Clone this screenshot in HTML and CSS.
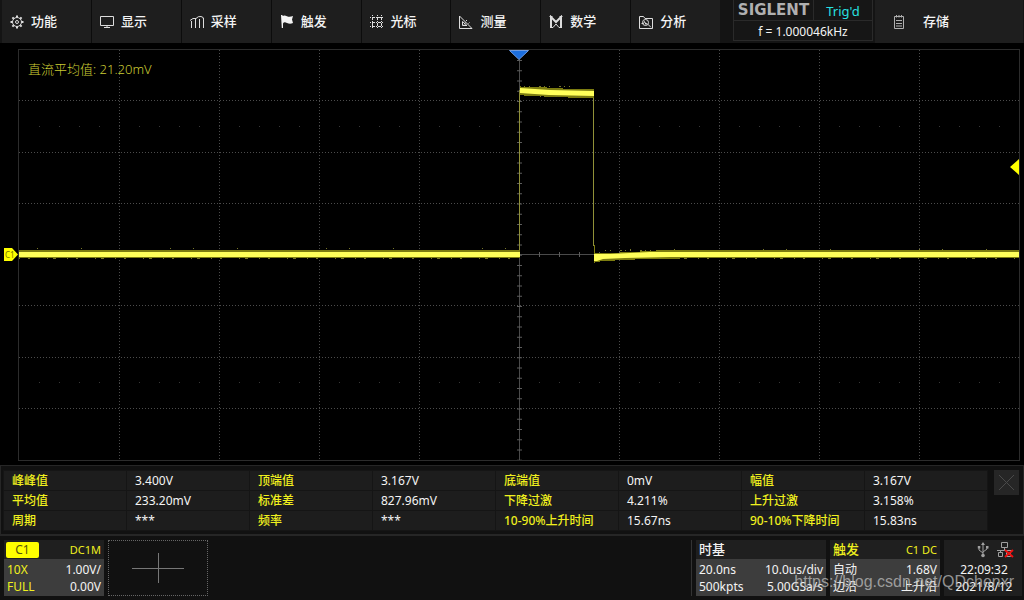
FILE: index.html
```html
<!DOCTYPE html>
<html lang="zh-CN">
<head>
<meta charset="utf-8">
<title>SIGLENT</title>
<link rel="stylesheet" href="styles.css">
</head>
<body>
<header class="topbar">
  <nav class="menu">
    <button class="menu-item" type="button"><svg class="icon" viewBox="0 0 14 14"><circle cx="7" cy="7" r="4.500"/><circle cx="7" cy="7" r="1.500"/><path class="teeth" d="M7 .5v2M7 11.500v2M.5 7h2M11.500 7h2M2.400 2.400l1.400 1.400M10.200 10.200l1.400 1.400M11.600 2.400l-1.400 1.400M3.800 10.200l-1.400 1.400"/></svg>功能</button>
    <button class="menu-item" type="button"><svg class="icon" viewBox="0 0 14 14"><path d="M.5 1.500h13v9H.5zM7 10.500v2M4 12.500h6"/></svg>显示</button>
    <button class="menu-item" type="button"><svg class="icon" viewBox="0 0 14 14"><path d="M1.500 13V6M5.500 13V4M9.500 13V4M13.500 13V3M0 5.500 3 3.500h3Q8 1 11 1.500t2.500 3"/></svg>采样</button>
    <button class="menu-item" type="button"><svg class="icon solid" viewBox="0 0 14 14"><path d="M1 0h1.500v1Q4.500 0 7 1.200T13 1l-1 3.500 1 3.500Q10 9.500 7 8T3 8.500V13H1.800z"/></svg>触发</button>
    <button class="menu-item" type="button"><svg class="icon" viewBox="0 0 14 14"><path d="M2.500 0v14M7.500 0v14M11.500 0v14M0 2.500h14M0 7.500h14M0 11.500h14" stroke-dasharray="1 1 3 1"/></svg>光标</button>
    <button class="menu-item" type="button"><svg class="icon" viewBox="0 0 14 14"><path d="M.5 1v12.500H13zM3.500 6.500v4H8zM5 9.500l1.500-2M7 6l1-1M9.500 8.500l1-1"/></svg>测量</button>
    <button class="menu-item" type="button"><svg class="icon" viewBox="0 0 14 14"><path class="thick" d="M2 12V2l5 5 5-5v10"/><path d="M.5 1.500h3M10.500 1.500h3M1 12.500h3L7 9l3 3.500h3"/></svg>数学</button>
    <button class="menu-item" type="button"><svg class="icon" viewBox="0 0 14 14"><path d="M.5 13.500v-12h4l1.500 2h7.500v10zM8.800 9.200l3 3M2.500 8.500h2l1-2 1.500 3 1-1.500"/><circle cx="6.500" cy="7.500" r="3"/></svg>分析</button>
  </nav>
  <section class="status">
    <span class="brand">SIGLENT</span>
    <span class="trig">Trig'd</span>
    <span class="freq">f = 1.000046kHz</span>
  </section>
  <button class="menu-item save" type="button"><svg class="icon dim" viewBox="0 0 14 14"><path d="M2.500 1.500h9v12h-9zM4.500 0v2.500M7 0v2.500M9.500 0v2.500M4 5.500h6M4 8.500h6M4 11h6"/></svg>存储</button>
</header>

<main class="plot">
  <svg class="scope" viewBox="0 43 1024 422" preserveAspectRatio="none" role="img" aria-label="C1">
    <g class="grid">
      <path d="M119.500 50v411M219.500 50v411M319.500 50v411M419.500 50v411M619.500 50v411M719.500 50v411M819.500 50v411M919.500 50v411"/>
      <path d="M19 100.500h1000M19 152.500h1000M19 203.500h1000M19 305.500h1000M19 357.500h1000M19 408.500h1000"/>
    </g>
    <path class="minor" d="M39 126.500h980M39 382.500h980"/>
    <path class="axis" d="M519.500 50v411M19 254.500h1000"/>
    <path class="ticks-v" d="M519.500 60v401"/>
    <path class="ticks-h" d="M539 254.500h480"/>
    <rect class="frame" x="18.500" y="49.500" width="1001" height="411"/>
    <path class="edge" d="M519.500 90v162M593.500 94v152"/>
    <g class="halo">
      <path d="M19 250h501v8H19zM520 86h1v1h26v1h16v1h31v9h-26v-1h-24v-1h-20v-1h-4zM594 245h1v8h25v-1h20v-1h16v-1h363v8H680v1h-45v1h-20v1h-15v1h-5v1h-1z"/>
    </g>
    <path class="noise" stroke-dasharray="1 8 2 17 1 5 3 11" d="M19 258.500h501M650 258.500h369"/>
    <path class="noise" stroke-dasharray="1 43 1 88 1 22" d="M37 248.500h483M630 249.500h389"/>
    <path class="noise" stroke-dasharray="1 4 1 9 2 3" d="M524 86.500h46M540 96.500h54M605 250.500h55"/>
    <path class="trace" d="M19 252h501v5H19zM520 88l30 2 44 1v5l-45-1-29-2zM594 254h16l40-2h369v5H670l-45 1-22 1-6 2h-3z"/>
    <path class="trigger-pos" d="M509.500 50.500h19l-9.500 9z"/>
    <path class="marker" d="M4 248h8l6 6.500-6 6.500H4zM1019 159v16l-9-8z"/>
    <text class="marker-text" x="5" y="258">C1</text>
  </svg>
  <p class="average">直流平均值: 21.20mV</p>
</main>

<section class="measure">
  <table class="measure-table">
    <tr><th>峰峰值</th><td>3.400V</td><th>顶端值</th><td>3.167V</td><th>底端值</th><td>0mV</td><th>幅值</th><td>3.167V</td></tr>
    <tr><th>平均值</th><td>233.20mV</td><th>标准差</th><td>827.96mV</td><th>下降过激</th><td>4.211%</td><th>上升过激</th><td>3.158%</td></tr>
    <tr><th>周期</th><td>***</td><th>频率</th><td>***</td><th>10-90%上升时间</th><td>15.67ns</td><th>90-10%下降时间</th><td>15.83ns</td></tr>
  </table>
  <button class="close" type="button" aria-label="关闭"><svg viewBox="0 0 25 25"><path d="M5 5l15 15M20 5 5 20"/></svg></button>
</section>

<footer class="bottombar">
  <section class="card channel">
    <div class="card-head"><span class="badge">C1</span><span class="coupling">DC1M</span></div>
    <div class="card-row"><span class="yellow">10X</span><span>1.00V/</span></div>
    <div class="card-row"><span class="yellow">FULL</span><span>0.00V</span></div>
  </section>
  <button class="add" type="button" aria-label="添加"><svg viewBox="0 0 52 30"><path d="M0 15.500h52M26.500 0v30"/></svg></button>
  <div class="right">
    <section class="card timebase">
      <div class="card-head"><strong>时基</strong></div>
      <div class="card-row"><span>20.0ns</span><span>10.0us/div</span></div>
      <div class="card-row"><span>500kpts</span><span>5.00GSa/s</span></div>
    </section>
    <section class="card trigger">
      <div class="card-head"><strong class="yellow">触发</strong><span class="coupling">C1 DC</span></div>
      <div class="card-row"><span>自动</span><span>1.68V</span></div>
      <div class="card-row"><span>边沿</span><span>上升沿</span></div>
    </section>
    <section class="clock">
      <div class="clock-icons">
        <svg class="usb" viewBox="0 0 12 16"><path d="M6 1v12M2 5v3l4 3M10 5v2L6 10"/><path class="fill" d="M6 0l2 3H4zM.8 4h2.500v2.500H.8zM9 4h2.500v2.500H9z"/><circle class="fill" cx="6" cy="13.500" r="1.800"/></svg>
        <svg class="lan" viewBox="0 0 17 16"><path d="M4.500.5h6v5h-6zM7.500 6v2.500M0 8.500h15M3.500 9v2M1.500 10.500h4v4h-4zM9.500 10.500h4v4h-4z"/><path class="cross" d="M8 8l8 7M16 8l-8 7"/></svg>
      </div>
      <time>22:09:32</time>
      <time>2021/8/12</time>
    </section>
  </div>
  <span class="watermark">https://blog.csdn.net/QDchenxr</span>
</footer>
</body>
</html>
```
FILE: styles.css
```css
* { box-sizing: border-box; }

body {
  margin: 0;
  min-height: 100vh;
  display: flex;
  flex-direction: column;
  background: #000;
  color: #f4f4f4;
  font: 12px/17px "Noto Sans", "Noto Sans CJK SC", sans-serif;
}

button {
  border: 0;
  padding: 0;
  color: inherit;
  font: inherit;
}

svg { display: block; fill: none; }

.yellow, .coupling { color: #f0f01e; }

/* Top bar */
.topbar {
  display: grid;
  grid-template-columns: 729fr 140px 148fr;
  column-gap: 2px;
  height: 43px;
  padding-left: 2px;
  padding-right: 1px;
  background: #141414;
}

.menu {
  display: grid;
  grid-template-columns: repeat(8, 1fr);
  column-gap: 1px;
  margin-right: 11px;
  background: #0c0c0c;
}

.menu-item {
  display: flex;
  align-items: center;
  gap: 7px;
  padding-left: 8px;
  background: #1e1e1e;
  font-size: 13px;
  font-weight: 500;
}

.icon {
  width: 14px;
  height: 14px;
  stroke: #ddd;
  stroke-width: 1;
}

.icon.solid { fill: #f4f4f4; stroke: none; }
.icon.dim { stroke: #b0b0b0; }
.icon .teeth, .icon .thick { stroke-width: 2; }

.save { padding-left: 17px; gap: 17px; }

.status {
  display: grid;
  grid-template: 20px 20px / 80px 1fr;
  align-self: start;
  border: 1px solid #2a2a2a;
  border-top: 0;
  background: #161616;
  text-align: center;
}

.brand {
  border-right: 1px solid #2a2a2a;
  color: #b0b0b0;
  font: bold 15px/20px "DejaVu Sans", sans-serif;
}

.trig { color: #27e0e0; font-size: 13px; line-height: 22px; }

.freq {
  grid-column: 1 / -1;
  border-top: 1px solid #2a2a2a;
  line-height: 21px;
}

/* Waveform */
.plot { position: relative; flex: 1; min-height: 300px; }
.scope { width: 100%; height: 100%; position: absolute; }

.average {
  position: absolute;
  left: 28px;
  top: 18px;
  margin: 0;
  color: #cccc33;
  font-size: 13px;
  font-weight: 300;
}

.grid { stroke: #4c4c4c; stroke-dasharray: 1 2; }
.minor { stroke: #383838; stroke-dasharray: 1 19; }
.axis { stroke: #4a4a4a; }
.ticks-v { stroke: #5c5c5c; stroke-width: 5; stroke-dasharray: 1 9.25; }
.ticks-h { stroke: #5c5c5c; stroke-width: 5; stroke-dasharray: 1 19; }
.frame { stroke: #2c2c2c; }
.edge { stroke: #909038; }
.halo { fill: #7c7c10; }
.noise { stroke: #77772a; }
.trace { fill: #ffff5a; }
.trigger-pos { fill: #1c6fe0; stroke: #6f9be0; }
.marker { fill: #ffff00; }
.marker-text { fill: #777700; font-size: 8px; }

/* Measurements */
.measure {
  display: flex;
  gap: 6px;
  padding: 4px 4px 3px 2px;
  border: 1px solid #262626;
  background: #111;
}

.measure-table {
  flex: 1;
  table-layout: fixed;
  border-collapse: collapse;
}

.measure-table th,
.measure-table td {
  width: 123px;
  height: 20px;
  padding: 0 8px;
  border: 1px solid #151515;
  background: #1d1d1d;
  line-height: 17px;
  text-align: left;
  white-space: nowrap;
}

.measure-table th { color: #f0f01e; font-weight: 500; }

.close { width: 25px; height: 25px; background: #262626; }
.close svg { stroke: #4a4a4a; stroke-width: 1; }

/* Bottom bar */
.bottombar {
  position: relative;
  display: flex;
  gap: 4px;
  padding: 4px 2px 4px 4px;
  border-top: 1px solid #262626;
  background: #111;
}

.card { background: #3d3d3d; }

.card-head {
  display: flex;
  justify-content: space-between;
  align-items: center;
  height: 19px;
  margin-bottom: 2px;
  padding: 0 3px;
  background: #1f1f1f;
}

.card-head strong { font-size: 13px; font-weight: 500; }
.coupling { font-size: 11px; }

.card-row {
  display: flex;
  justify-content: space-between;
  padding: 0 3px;
}

.card-row:last-child { padding-bottom: 1px; }

.channel { width: 100px; }
.channel .card-head { padding-left: 2px; }

.badge {
  width: 33px;
  border-radius: 2px;
  background: #ffff00;
  color: #55550a;
  line-height: 16px;
  text-align: center;
}

.add {
  display: grid;
  place-items: center;
  width: 100px;
  border: 1px dotted #666;
  background: #111;
}

.add svg { width: 52px; height: 30px; stroke: #777; }

.right {
  display: flex;
  gap: 4px;
  margin-left: auto;
  padding-left: 4px;
  border-left: 1px solid #333;
}

.timebase { width: 130px; }
.trigger { width: 110px; }
.clock { width: 78px; background: #1f1f1f; }
.clock time { display: block; padding-left: 2px; text-align: center; }

.clock-icons {
  display: flex;
  justify-content: flex-end;
  gap: 8px;
  height: 21px;
  padding: 2px 8px 0 0;
}

.usb, .lan { height: 16px; stroke: #a0a0a0; }
.usb { width: 12px; }
.lan { width: 17px; }
.usb .fill { fill: #a0a0a0; stroke: none; }
.lan .cross { stroke: #ee1111; stroke-width: 2; }

.watermark {
  position: absolute;
  right: 10px;
  bottom: 9px;
  color: rgba(200, 200, 200, 0.7);
  font: 16px/18px "Liberation Sans", sans-serif;
}
```
